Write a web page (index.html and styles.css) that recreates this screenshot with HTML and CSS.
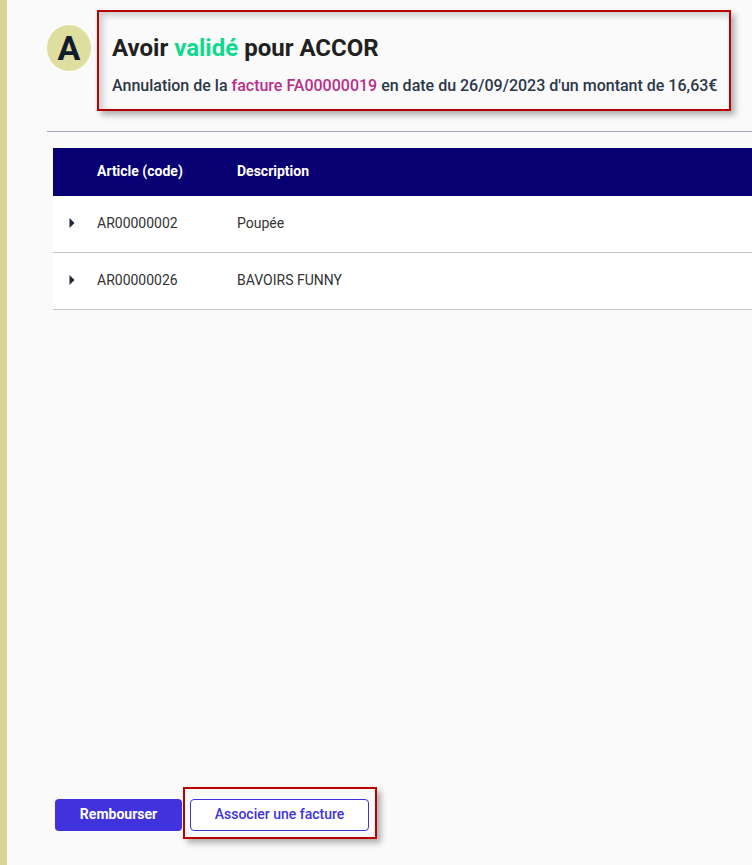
FILE: index.html
```html
<!DOCTYPE html>
<html lang="fr">
<head>
    <meta charset="UTF-8">
    <meta name="viewport" content="width=device-width, initial-scale=1.0">
    <title>Avoir</title>
    <link rel="stylesheet" href="styles.css">
</head>

<body>
    <div class="container">
        <div class="avoir_header">
            <div class="avoir_avatar">A</div>
            <div class="avoir_heading">
                <h1 class="avoir_title">Avoir <span class="avoir_status">validé</span> pour ACCOR</h1>
                <p class="avoir_subtitle">Annulation de la <span class="avoir_link">facture FA00000019</span> en date du 26/09/2023 d'un montant de 16,63€</p>
            </div>
            <div class="annotation annotation_header"></div>
        </div>
        <div class="avoir_table">
            <div class="avoir_row avoir_row_head">
                <div class="avoir_toggle"></div>
                <div class="avoir_code">Article (code)</div>
                <div>Description</div>
            </div>
            <div class="avoir_row">
                <div class="avoir_toggle"><svg width="6" height="10" viewBox="0 0 6 10"><path d="M0.5 0 L5.5 5 L0.5 10 Z" fill="#1f2937"/></svg></div>
                <div class="avoir_code">AR00000002</div>
                <div>Poupée</div>
            </div>
            <div class="avoir_row">
                <div class="avoir_toggle"><svg width="6" height="10" viewBox="0 0 6 10"><path d="M0.5 0 L5.5 5 L0.5 10 Z" fill="#1f2937"/></svg></div>
                <div class="avoir_code">AR00000026</div>
                <div>BAVOIRS FUNNY</div>
            </div>
        </div>
        <div class="avoir_actions">
            <button class="btn btn_primary">Rembourser</button>
            <button class="btn btn_outline">Associer une facture</button>
            <div class="annotation annotation_button"></div>
        </div>
    </div>
</body>
</html>
```

FILE: styles.css
```css
* {
    margin: 0;
    padding: 0;
    box-sizing: border-box;
    font-family: Roboto, sans-serif;
}

html, body {
    height: 100%;
    overflow: hidden;
}

body {
    background: #fafafa;
    color: #212121;
}

.container {
    position: relative;
    display: flex;
    flex-direction: column;
    height: 865px;
    border-left: 7px solid #d6d596;
    padding: 25px 0 34px 40px;
}

.avoir_header {
    display: flex;
    gap: 21px;
    height: 107px;
    border-bottom: 1px solid #9ea7b5;
}

.avoir_avatar {
    flex: none;
    width: 44px;
    height: 46px;
    border-radius: 50%;
    background: #e0de9e;
    color: #111c2e;
    font-size: 34px;
    font-weight: 700;
    line-height: 47px;
    text-align: center;
}

.avoir_title {
    margin-top: 9px;
    font-size: 24px;
    font-weight: 700;
    line-height: 29px;
    color: #212121;
}

.avoir_status {
    color: #10d98f;
}

.avoir_subtitle {
    margin-top: 13px;
    font-size: 16px;
    font-weight: 500;
    line-height: 20px;
    white-space: nowrap;
    color: #2c3748;
}

.avoir_link {
    color: #b92f8a;
}

.avoir_table {
    margin: 16px 0 0 6px;
    background: #fff;
    font-size: 14px;
    color: #333;
}

.avoir_row {
    display: flex;
    align-items: center;
    height: 57px;
    padding-bottom: 2px;
    border-bottom: 1px solid #c4c4c4;
}

.avoir_row_head {
    height: 48px;
    border-bottom: none;
    background: #080072;
    color: #fff;
    font-weight: 700;
}

.avoir_toggle {
    display: flex;
    align-items: center;
    width: 16px;
    margin-left: 16px;
    margin-right: 12px;
}

.avoir_code {
    width: 140px;
}

.avoir_actions {
    position: relative;
    display: flex;
    gap: 8px;
    margin: auto 0 0 8px;
}

.btn {
    height: 32px;
    padding-bottom: 2px;
    border-radius: 4px;
    font-size: 14px;
    cursor: pointer;
}

.btn_primary {
    width: 127px;
    border: none;
    background: #4033dd;
    color: #fff;
    font-weight: 700;
}

.btn_outline {
    width: 179px;
    border: 1px solid #4033dd;
    background: #fff;
    color: #4033dd;
    font-weight: 500;
}

.annotation {
    position: absolute;
    border: 2px solid #bb0000;
    box-shadow: 4px 4px 6px rgba(0, 0, 0, 0.3), inset 4px 4px 6px rgba(0, 0, 0, 0.18);
    pointer-events: none;
}

.annotation_header {
    left: 90px;
    top: 10px;
    width: 634px;
    height: 101px;
}

.annotation_button {
    left: 128px;
    top: -12px;
    width: 194px;
    height: 52px;
    box-shadow: 4px 4px 6px rgba(0, 0, 0, 0.3);
}
```
